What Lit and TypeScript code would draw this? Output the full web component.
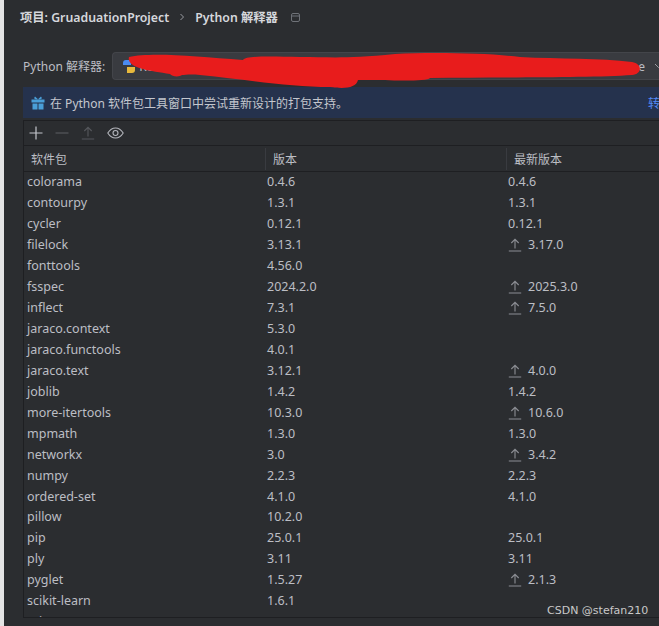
import { LitElement, html, css, svg } from 'lit';
import { customElement } from 'lit/decorators.js';

type Pkg = [string, string, string, boolean];

const PACKAGES: Pkg[] = [
  ['colorama', '0.4.6', '0.4.6', false],
  ['contourpy', '1.3.1', '1.3.1', false],
  ['cycler', '0.12.1', '0.12.1', false],
  ['filelock', '3.13.1', '3.17.0', true],
  ['fonttools', '4.56.0', '', false],
  ['fsspec', '2024.2.0', '2025.3.0', true],
  ['inflect', '7.3.1', '7.5.0', true],
  ['jaraco.context', '5.3.0', '', false],
  ['jaraco.functools', '4.0.1', '', false],
  ['jaraco.text', '3.12.1', '4.0.0', true],
  ['joblib', '1.4.2', '1.4.2', false],
  ['more-itertools', '10.3.0', '10.6.0', true],
  ['mpmath', '1.3.0', '1.3.0', false],
  ['networkx', '3.0', '3.4.2', true],
  ['numpy', '2.2.3', '2.2.3', false],
  ['ordered-set', '4.1.0', '4.1.0', false],
  ['pillow', '10.2.0', '', false],
  ['pip', '25.0.1', '25.0.1', false],
  ['ply', '3.11', '3.11', false],
  ['pyglet', '1.5.27', '2.1.3', true],
  ['scikit-learn', '1.6.1', '', false],
  ['scipy', '1.15.2', '', false],
];

const upgradeIcon = (color: string) => html`
  <svg class="up" width="14" height="14" viewBox="0 0 14 14" fill="none" stroke=${color} stroke-width="1.1">
    <path d="M7 10.5V1.5M3.3 5L7 1.3 10.7 5M0.8 13h12.4" />
  </svg>
`;

@customElement('app-root')
export class AppRoot extends LitElement {
  static styles = css`
    :host {
      display: flex;
      width: 659px;
      height: 626px;
      overflow: hidden;
      position: relative;
      background: #2b2d30;
      color: #bcbec4;
      font-family: 'Noto Sans', 'Noto Sans CJK SC', sans-serif;
      font-size: 12px;
    }
    .edge {
      width: 4px;
      flex: none;
      background: #e4e4e4;
    }
    .panel {
      flex: 1;
      min-width: 0;
      display: flex;
      flex-direction: column;
    }
    .crumbs {
      height: 34px;
      padding-left: 16px;
      display: flex;
      align-items: center;
      gap: 10px;
      font-size: 12.3px;
      font-weight: 600;
      color: #d5d7dc;
      white-space: nowrap;
    }
    .crumbs .chev {
      width: 6px;
      height: 8px;
      color: #9a9ca2;
    }
    .crumbs .pin {
      margin-left: 3px;
    }
    .interp {
      margin-top: 18px;
      height: 28px;
      padding-left: 19px;
      display: flex;
      align-items: center;
      gap: 7px;
      white-space: nowrap;
    }
    .combo {
      flex: 1;
      height: 28px;
      box-sizing: border-box;
      background: #393b40;
      border: 1px solid #43454a;
      border-right: none;
      border-radius: 4px 0 0 4px;
      display: flex;
      align-items: center;
      padding-left: 9px;
      gap: 3px;
      color: #bcbec4;
    }
    .combo .tail {
      margin-left: auto;
      margin-right: -4px;
      display: flex;
      align-items: center;
      gap: 9px;
    }
    .banner {
      margin: 7px 0 0 19px;
      height: 31px;
      background: #25324d;
      display: flex;
      align-items: center;
      padding-left: 8px;
      gap: 5px;
      white-space: nowrap;
      position: relative;
      color: #c4c7ce;
    }
    .banner .link {
      position: absolute;
      left: 625px;
      color: #548af7;
    }
    .table {
      margin: 2px 0 0 19px;
      height: 498px;
      box-sizing: border-box;
      border: 1px solid #1e1f22;
      border-right: none;
      overflow: hidden;
    }
    .tools {
      height: 25px;
      box-sizing: border-box;
      display: flex;
      align-items: center;
      gap: 12px;
      padding-left: 5px;
      border-bottom: 1px solid #1e1f22;
    }
    .tools .up {
      margin-right: 0;
    }
    .cols,
    .row {
      display: grid;
      grid-template-columns: 241px 241px 1fr;
    }
    .cols {
      height: 26px;
      box-sizing: border-box;
      align-items: center;
      border-bottom: 1px solid #1e1f22;
    }
    .cols span {
      padding-left: 7px;
      height: 22px;
      line-height: 24px;
      border-left: 1px solid #393b40;
    }
    .cols span:first-child {
      border-left: none;
    }
    .row {
      height: 20.95px;
      align-items: center;
      white-space: nowrap;
      line-height: 20px;
      font-size: 12.5px;
    }
    .row span {
      padding-left: 3px;
      display: flex;
      align-items: center;
    }
    .row span:nth-child(2) {
      padding-left: 2px;
    }
    .row span:nth-child(3) {
      padding-left: 2px;
    }
    .up {
      margin-right: 6px;
      flex: none;
    }
    .mark {
      position: absolute;
      left: 547px;
      top: 604px;
      font-family: 'DejaVu Sans', sans-serif;
      font-size: 11px;
      color: #c9c9c9;
      white-space: nowrap;
    }
    .scribble {
      position: absolute;
      left: 0;
      top: 0;
      pointer-events: none;
    }
  `;

  render() {
    return html`
      <div class="edge"></div>
      <div class="panel">
        <div class="crumbs">
          <span>项目: GruaduationProject</span>
          <svg class="chev" viewBox="0 0 6 8" fill="none" stroke="currentColor"><path d="M1.5 1l3 3-3 3" /></svg>
          <span>Python 解释器</span>
          <svg class="pin" width="9" height="9" viewBox="0 0 9 9" fill="none" stroke="#6f7278">
            <rect x="0.5" y="0.5" width="8" height="8" rx="1.5" />
            <path d="M0.5 3h8" />
          </svg>
        </div>
        <div class="interp">
          <span>Python 解释器:</span>
          <div class="combo">
            <svg width="14" height="15" viewBox="0 0 14 15">
              <path d="M4 1h5v5H1V4a3 3 0 0 1 3-3z" fill="#4b8bf0" />
              <path d="M5 8h8v3a3 3 0 0 1-3 3H5z" fill="#e8b93c" />
            </svg>
            <span>Re</span>
            <span class="tail">
              <span>e</span>
              <svg width="9" height="6" viewBox="0 0 9 6" fill="none" stroke="#9a9ca2"><path d="M1 1l3.5 3.5L8 1" /></svg>
            </span>
          </div>
        </div>
        <div class="banner">
          <svg width="14" height="14" viewBox="0 0 14 14" fill="#4a9fd8">
            <rect x="0.5" y="3.5" width="13" height="3" />
            <rect x="1.5" y="7.5" width="5" height="6" />
            <rect x="7.5" y="7.5" width="5" height="6" />
            <path d="M7 3.2L4 0.6 3 2.2 5 3.4zM7 3.2l3-2.6 1 1.6L9 3.4z" />
          </svg>
          <span>在 Python 软件包工具窗口中尝试重新设计的打包支持。</span>
          <span class="link">转</span>
        </div>
        <div class="table">
          <div class="tools">
            <svg width="14" height="14" viewBox="0 0 14 14" stroke="#c4c6cc" stroke-width="1.2"><path d="M7 0.5v13M0.5 7h13" /></svg>
            <svg width="14" height="14" viewBox="0 0 14 14" stroke="#55575c" stroke-width="1.2"><path d="M0.5 7h13" /></svg>
            ${upgradeIcon('#55575c')}
            <svg width="17" height="12" viewBox="0 0 17 12" fill="none" stroke="#b4b6bc" stroke-width="1.1">
              <path d="M0.8 6C3 2.5 5.5 1 8.5 1s5.5 1.5 7.7 5c-2.2 3.5-4.7 5-7.7 5S3 9.5 0.8 6z" />
              <circle cx="8.5" cy="6" r="2.5" />
            </svg>
          </div>
          <div class="cols">
            <span>软件包</span>
            <span>版本</span>
            <span>最新版本</span>
          </div>
          ${PACKAGES.map(
            ([name, version, latest, upgrade]) => html`
              <div class="row">
                <span>${name}</span>
                <span>${version}</span>
                <span>${upgrade ? upgradeIcon('#8c8e94') : ''}${latest}</span>
              </div>
            `
          )}
        </div>
      </div>
      <span class="mark">CSDN @stefan210</span>
      <svg class="scribble" width="659" height="100" viewBox="0 0 659 100" fill="#e81c1c">
        ${svg`<path d="M129 57C150 52 195 56 243 60C246 56 265 56 300 57C330 57 345 59 395 54C430 52 490 53 520 57C560 59 600 58 632 62C643 64 642 74 632 75C590 78 500 77 430 78C428 81 400 81 385 80L358 80C356 88 345 89 330 87C290 87 250 80 200 75C190 74 185 75 182 75C180 77 172 77 170 74C150 71 126 68 129 57Z" />`}
      </svg>
    `;
  }
}
